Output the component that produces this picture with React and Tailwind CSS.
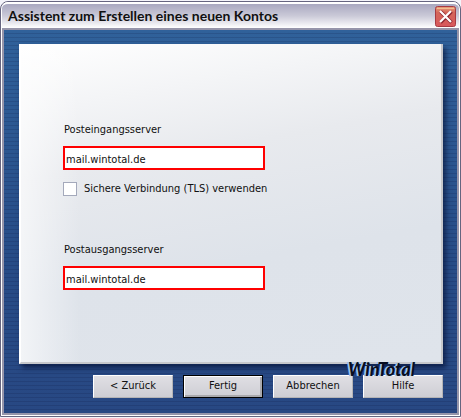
import { useState } from "react";

function ServerField({ id, label, value, onChange }) {
  return (
    <div>
      <label htmlFor={id} className="block pl-px leading-4">
        {label}
      </label>
      <input
        id={id}
        type="text"
        value={value}
        onChange={(e) => onChange(e.target.value)}
        className="mt-2 block h-6 w-full border-2 border-[#ff0000] bg-white px-px pt-[2px] outline-none"
      />
    </div>
  );
}

function WizardButton({ children, primary = false }) {
  return (
    <button
      type="button"
      className={
        primary
          ? "h-[23px] w-20 border border-black bg-linear-to-b from-[#e0dfe4] to-[#ceced4] shadow-[inset_1px_1px_0_#ffffff,inset_-2px_-2px_0_#aaaaad]"
          : "h-[23px] w-20 border border-t-white border-l-white border-r-[#b5b4b5] border-b-[#b5b4b5] bg-linear-to-b from-[#e0dfe4] to-[#ceced4]"
      }
    >
      {children}
    </button>
  );
}

export default function App() {
  const [incoming, setIncoming] = useState("mail.wintotal.de");
  const [outgoing, setOutgoing] = useState("mail.wintotal.de");
  const [secure, setSecure] = useState(false);

  return (
    <div className="flex min-h-screen flex-col bg-[#f4f4fa] pt-px pb-px font-['DejaVu_Sans_Condensed','Noto_Sans',sans-serif] text-[11px] text-[#101010]">
      <main className="flex flex-1 flex-col rounded-t-lg border border-[#65647f] bg-white px-px pb-px">
        <header className="flex h-[26px] items-center justify-between rounded-t-md border-t-2 border-white bg-linear-to-b from-[#a9a8c0] via-[#cbcad8] to-white pr-[3px] pl-[6px]">
          <h1 className="font-['Lato',sans-serif] text-sm leading-5 font-bold">
            Assistent zum Erstellen eines neuen Kontos
          </h1>
          <button type="button" aria-label="Schließen" className="size-[21px]">
            <svg viewBox="0 0 21 21" className="block size-full">
              <defs>
                <linearGradient id="close-fill" x1="0" y1="0" x2="0" y2="1">
                  <stop offset="0" stopColor="#e8a27c" />
                  <stop offset="0.3" stopColor="#d4665a" />
                  <stop offset="1" stopColor="#d8585c" />
                </linearGradient>
              </defs>
              <rect x="0.5" y="0.5" width="20" height="20" rx="2" fill="url(#close-fill)" stroke="#a73a42" />
              <path d="M2 2.5h17" stroke="#f2bd90" />
              <path d="M5.5 5.5l11 11M16.5 5.5l-11 11" stroke="#8d2530" strokeWidth="3.6" />
              <path d="M5 5l11 11M16 5L5 16" stroke="#ffffff" strokeWidth="2.2" />
            </svg>
          </button>
        </header>

        <div className="flex flex-1 flex-col border-2 border-[#9695aa] bg-[repeating-linear-gradient(to_bottom,transparent_0_3px,rgba(0,0,40,0.13)_3px_4px),linear-gradient(to_bottom,#30619a,#274c87_60%,#284883)] pt-[14px] pr-[14px] pb-[15px] pl-[15px]">
          <section className="flex-1 border-r-2 border-b-2 border-l-2 border-r-[#c6c7cb] border-b-[#c6c7cb] border-l-white bg-[linear-gradient(to_right,rgba(255,255,255,0.6),transparent_14%),linear-gradient(170deg,#ffffff,#e8eaee_35%,#dee3ea_65%,#dfe4eb)] pt-[78px] pr-4 pb-[70px] pl-[42px] shadow-[3px_4px_5px_rgba(0,10,45,0.6)]">
            <form className="w-[202px]">
              <ServerField
                id="incoming"
                label="Posteingangsserver"
                value={incoming}
                onChange={setIncoming}
              />
              <label className="mt-[11px] flex items-center gap-[7px] leading-4 whitespace-nowrap">
                <input
                  type="checkbox"
                  checked={secure}
                  onChange={(e) => setSecure(e.target.checked)}
                  className="size-[14px] shrink-0 appearance-none border border-[#a4a9bb] bg-white checked:bg-[#30619a]"
                />
                Sichere Verbindung (TLS) verwenden
              </label>
              <div className="mt-[45px]">
                <ServerField
                  id="outgoing"
                  label="Postausgangsserver"
                  value={outgoing}
                  onChange={setOutgoing}
                />
              </div>
            </form>
          </section>

          <footer className="relative mt-[11px] flex justify-end gap-[10px]">
            <WizardButton>&lt; Zurück</WizardButton>
            <WizardButton primary>Fertig</WizardButton>
            <WizardButton>Abbrechen</WizardButton>
            <WizardButton>Hilfe</WizardButton>
            <span className="pointer-events-none absolute -top-3 right-7 font-['Lato',sans-serif] text-lg leading-3 font-bold text-[#080d20] italic [text-shadow:-1px_0_0_#a9cdf8,-2px_0_0_#8db4e6]">
              WinTotal
            </span>
          </footer>
        </div>
      </main>
    </div>
  );
}
